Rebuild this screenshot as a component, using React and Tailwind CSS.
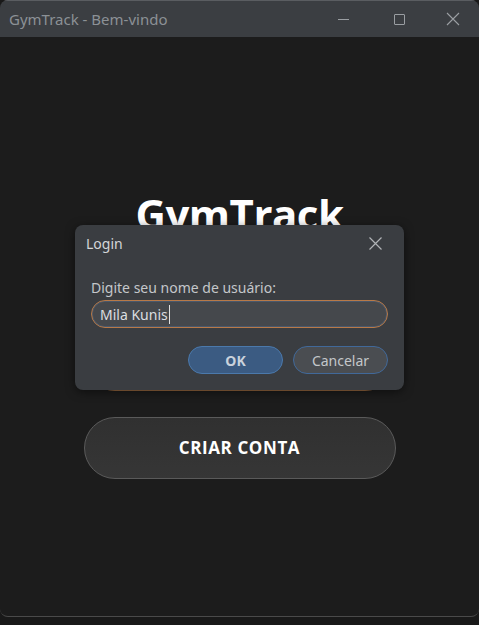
export default function App() {
  return (
    <div className="relative w-[479px] h-[625px] overflow-hidden bg-[#191919] font-['Noto_Sans','Open_Sans',sans-serif]">
      {/* window */}
      <div className="flex flex-col h-[617px] rounded-t-[8px] rounded-b-[8px] border-b border-[#4a4a4a] bg-[#1c1c1c] overflow-hidden">
        {/* title bar */}
        <div className="flex items-center h-[37px] shrink-0 bg-[#3b3e42] border-t border-[#5a5d61]">
          <span className="pl-[9px] text-[15px] text-[#8c9196] leading-none">GymTrack - Bem-vindo</span>
          <div className="ml-auto flex items-center h-full">
            <div className="w-[56px] h-full flex items-center justify-center">
              <div className="w-[11px] h-px bg-[#9a9ea2]" />
            </div>
            <div className="w-[56px] h-full flex items-center justify-center">
              <div className="w-[11px] h-[11px] border border-[#9a9ea2] rounded-[1px]" />
            </div>
            <div className="w-[52px] h-full flex items-center justify-center">
              <svg width="14" height="14" viewBox="0 0 14 14" className="text-[#9a9ea2]">
                <path d="M1 1L13 13M13 1L1 13" stroke="currentColor" strokeWidth="1.1" />
              </svg>
            </div>
          </div>
        </div>

        {/* body */}
        <div className="flex flex-col items-center pt-[156px]">
          <h1 className="text-[42px] font-bold text-white leading-none tracking-[-0.5px] font-['Open_Sans',sans-serif]">GymTrack</h1>
          <div className="mt-[94px] w-[312px] h-[62px] rounded-full border border-[#9a6a40] bg-[#2e2e2e]" />
          <button className="mt-[26px] w-[312px] h-[62px] rounded-full border border-[#5a5a5a] bg-gradient-to-b from-[#303030] to-[#363636] text-white text-[17px] font-bold tracking-[0.6px] font-['Open_Sans',sans-serif]">
            CRIAR CONTA
          </button>
        </div>
      </div>

      {/* login dialog */}
      <div className="absolute left-[75px] top-[225px] w-[329px] h-[165px] rounded-[8px] bg-[#3a3d41] shadow-[0_2px_10px_rgba(0,0,0,0.5)]">
        <div className="flex items-center h-[36px] pl-[11px] pr-[22px]">
          <span className="text-[14px] text-[#d4d6d8]">Login</span>
          <svg width="13" height="13" viewBox="0 0 13 13" className="ml-auto text-[#b0b3b6]">
            <path d="M0.5 0.5L12.5 12.5M12.5 0.5L0.5 12.5" stroke="currentColor" strokeWidth="1.2" />
          </svg>
        </div>
        <div className="px-[16px] pt-[20px]">
          <div className="text-[14px] text-[#c4c7ca] leading-none">Digite seu nome de usuário:</div>
          <div className="mt-[5px] h-[28px] rounded-full border border-[#b87a48] bg-[#45484c] flex items-center pl-[8px] shadow-[inset_0_0_0_1px_rgba(80,120,170,0.35)]">
            <span className="text-[14px] text-[#dcdee0]">Mila Kunis</span>
            <span className="w-px h-[19px] bg-[#e0e0e0] ml-[1px]" />
          </div>
          <div className="mt-[18px] flex justify-end gap-[10px]">
            <button className="w-[95px] h-[28px] rounded-full bg-[#3b5b82] border border-[#4b79ab] text-[14px] font-bold text-[#c9d2dc]">OK</button>
            <button className="w-[95px] h-[28px] rounded-full bg-[#4a4d51] border border-[#41699a] text-[14px] text-[#c4c7ca]">Cancelar</button>
          </div>
        </div>
      </div>
    </div>
  );
}
